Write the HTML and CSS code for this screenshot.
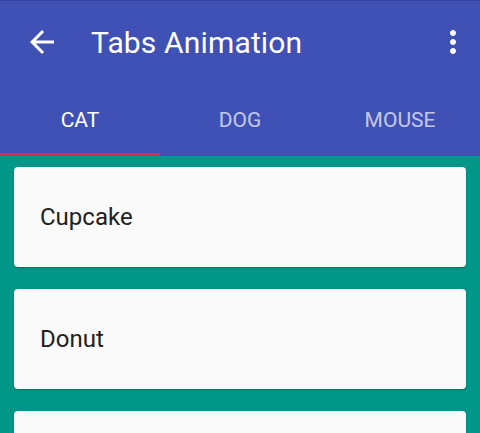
FILE: index.html
```html
<!DOCTYPE html>
<html>
<head>
<meta charset="utf-8">
<link rel="stylesheet" href="styles.css">
</head>
<body>
<div class="screen">
  <header class="appbar">
    <div class="toolbar">
      <button class="icon-btn back" aria-label="Back">
        <svg width="36" height="36" viewBox="0 0 24 24"><path fill="#fff" d="M20 11H7.83l5.59-5.59L12 4l-8 8 8 8 1.41-1.41L7.83 13H20v-2z"/></svg>
      </button>
      <h1 class="title">Tabs Animation</h1>
      <button class="icon-btn more" aria-label="More options">
        <svg width="36" height="36" viewBox="0 0 24 24"><path fill="#fff" d="M12 8c1.1 0 2-.9 2-2s-.9-2-2-2-2 .9-2 2 .9 2 2 2zm0 2c-1.1 0-2 .9-2 2s.9 2 2 2 2-.9 2-2-.9-2-2-2zm0 6c-1.1 0-2 .9-2 2s.9 2 2 2 2-.9 2-2-.9-2-2-2z"/></svg>
      </button>
    </div>
    <nav class="tabs">
      <div class="tab active">CAT</div>
      <div class="tab">DOG</div>
      <div class="tab">MOUSE</div>
      <div class="indicator"></div>
    </nav>
  </header>
  <main class="list">
    <div class="card">Cupcake</div>
    <div class="card">Donut</div>
    <div class="card"></div>
  </main>
</div>
</body>
</html>
```
FILE: styles.css
```css
* { box-sizing: border-box; }
html, body { margin: 0; padding: 0; }
body {
  width: 480px;
  height: 433px;
  overflow: hidden;
  font-family: Roboto, "Noto Sans", sans-serif;
  background: #009688;
}
.screen { display: flex; flex-direction: column; height: 433px; overflow: hidden; }
.appbar {
  background: #3F51B5;
  box-shadow: inset 0 1px 0 #34449c;
}
.toolbar {
  height: 84px;
  display: flex;
  align-items: center;
  padding: 0 9px 0 24px;
}
.icon-btn {
  background: none;
  border: 0;
  padding: 0;
  width: 36px;
  height: 36px;
  display: flex;
  align-items: center;
  justify-content: center;
}
.icon-btn svg { display: block; }
.title {
  margin: 0 0 0 31px;
  flex: 1;
  font-size: 30px;
  font-weight: 400;
  color: #fff;
  letter-spacing: 0.15px;
}
.tabs {
  position: relative;
  display: grid;
  grid-template-columns: repeat(3, 1fr);
  height: 72px;
}
.tab {
  display: flex;
  align-items: center;
  justify-content: center;
  font-size: 21px;
  font-weight: 400;
  color: rgba(255,255,255,0.7);
}
.tab.active { color: #fff; }
.indicator {
  position: absolute;
  left: 0;
  bottom: 0;
  width: 160px;
  height: 3px;
  background: #E91E63;
}
.list {
  display: flex;
  flex-direction: column;
  gap: 22px;
  padding: 11px 14px;
}
.card {
  flex: none;
  height: 100px;
  background: #FAFAFA;
  border-radius: 4px;
  box-shadow: 0 1px 2px rgba(0,0,0,0.25);
  display: flex;
  align-items: center;
  padding-left: 26px;
  font-size: 24px;
  color: #212121;
}
```
